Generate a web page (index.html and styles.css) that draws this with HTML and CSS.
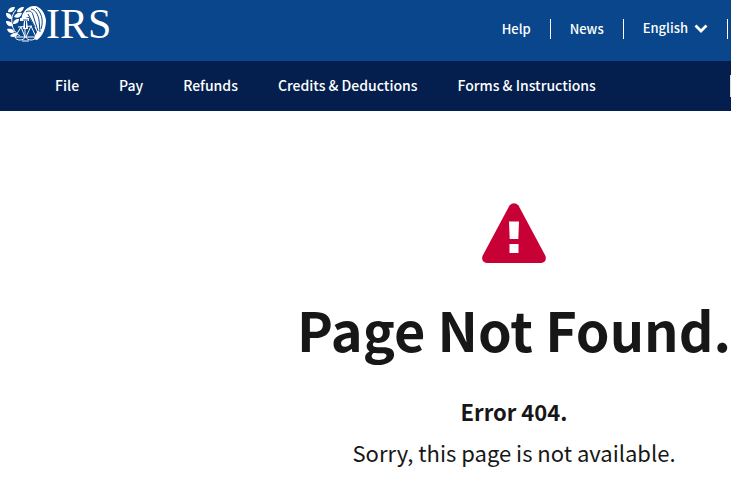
FILE: index.html
```html
<!DOCTYPE html>
<html lang="en">

<head>
    <meta charset="UTF-8">
    <meta name="viewport" content="width=device-width, initial-scale=1.0">
    <title>Page Not Found | IRS</title>
    <link rel="stylesheet" href="styles.css">
</head>

<body>
    <header>
        <div class="top-bar">
            <a class="logo" href="/">
                <!-- eagle, scales and olive branch -->
                <svg class="emblem" viewBox="0 0 40 36" aria-hidden="true">
                    <g fill="#fff">
                        <path d="M9 1C4 1 2 3 2 6c4 1 6-1 7-5z" />
                        <path d="M0 7c0 4 2 6 6 6 0-4-2-6-6-6z" />
                        <path d="M0 15c0 4 3 6 7 5-1-4-3-5-7-5z" />
                        <path d="M1 23c1 4 4 5 8 3-2-3-4-4-8-3z" />
                        <path d="M4 30c3 2 6 1 8-2-3-2-6-1-8 2z" />
                        <path d="M18 1c-4 0-7 2-7 5 4 1 6-1 7-5z" />
                        <path d="M16 7c-4-1-7 1-8 4 4 2 7 0 8-4z" />
                        <path d="M13 13c-4 0-6 2-6 5 4 0 6-2 6-5z" />
                        <path d="M18 6c3-5 7-6 11-6 6 1 10 7 11 14 0 8-3 16-9 20l-3-1 3-7-4-8-4-7-4 1-3 3c-1-3 0-7 2-9z" />
                        <path d="M14 12h9v3h-2l1 8h-5l1-8h-4z" />
                    </g>
                    <g fill="none" stroke="#fff">
                        <path d="M10 4C5 9 5 16 7 22c2 4 4 6 7 8" />
                        <path d="M12 21l14-1M19 20v12M15 21l-6 10h10zM25 20l-5 11h10z" />
                        <path d="M9 31c1 4 9 4 10 0M20 31c1 4 9 4 10 0M16 35h7" />
                    </g>
                    <g fill="none" stroke="#09468b">
                        <path d="M20 6c3-2 6-1 7 3l5 16M25 3c5 1 7 6 8 11l1 12M30 2c5 4 8 12 5 21" />
                        <path d="M22 8l7 13M17 14h5M19.500 15v7" />
                    </g>
                </svg>
                <span>IRS</span>
            </a>
            <ul class="top-links">
                <li><a href="/help">Help</a></li>
                <li><a href="/news">News</a></li>
                <li>
                    <button type="button" aria-haspopup="true">English
                        <svg class="chevron" viewBox="0 0 14 9" aria-hidden="true">
                            <path d="M1.500 1.500L7 7l5.500-5.500" fill="none" stroke="#fff" stroke-width="2.800" />
                        </svg>
                    </button>
                </li>
            </ul>
        </div>
        <nav class="main-nav">
            <ul>
                <li><a href="/file">File</a></li>
                <li><a href="/pay">Pay</a></li>
                <li><a href="/refunds">Refunds</a></li>
                <li><a href="/credits">Credits &amp; Deductions</a></li>
                <li><a href="/forms">Forms &amp; Instructions</a></li>
            </ul>
            <input class="search" type="search" aria-label="Search">
        </nav>
    </header>

    <main>
        <div class="error">
            <svg class="warning" viewBox="0 0 64 60" aria-hidden="true">
                <path d="M27.500 2.500Q32-2 36.500 2.500L63.500 53Q65 59.500 59 60H5Q-1 59.500.5 53z" fill="#c70036" />
                <path d="M27 18.500h10l-.7 17.500h-8.600zM27.500 41h9v9h-9z" fill="#fff" />
            </svg>
            <h1>Page Not Found.</h1>
            <h2>Error 404.</h2>
            <p>Sorry, this page is not available.</p>
        </div>
    </main>
</body>

</html>
```
FILE: styles.css
```css
body {
    font-family: "Noto Sans CJK SC", "Noto Sans", sans-serif;
    background-color: #fff;
    color: #171717;
    margin: 0;
}

ul {
    display: flex;
    list-style: none;
    margin: 0;
    padding: 0;
}

a {
    color: #fff;
    text-decoration: none;
}

.top-bar {
    display: flex;
    justify-content: space-between;
    align-items: flex-start;
    height: 61px;
    background-color: #09468b;
    padding: 0 3px 0 6px;
    box-sizing: border-box;
}

.logo {
    display: flex;
    padding-top: 6px;
    font-family: "Liberation Serif", serif;
    font-size: 42px;
    line-height: 36px;
}

.emblem {
    width: 40px;
    height: 36px;
}

.top-links {
    padding-top: 19px;
    font-size: 13px;
    font-weight: 500;
    line-height: 20px;
}

.top-links li {
    border-right: 1px solid #fff;
    padding: 0 19px;
}

.top-links button {
    display: flex;
    align-items: center;
    gap: 6px;
    border: none;
    background: none;
    color: #fff;
    font: inherit;
    line-height: 18px;
    padding: 0;
    cursor: pointer;
}

.chevron {
    width: 14px;
    height: 9px;
}

.main-nav {
    display: flex;
    align-items: center;
    justify-content: space-between;
    height: 50px;
    background-color: #041f4e;
    padding-left: 55px;
    overflow: hidden;
}

.main-nav ul {
    gap: 40px;
    padding-bottom: 2px;
    font-size: 14px;
    font-weight: 500;
    line-height: 24px;
    white-space: nowrap;
}

.search {
    flex: none;
    width: 200px;
    height: 22px;
    margin-right: -199px;
    border: 1px solid #ddd;
    box-sizing: border-box;
}

main {
    display: flex;
    justify-content: flex-end;
    padding-top: 92px;
}

.error {
    text-align: center;
}

.warning {
    display: block;
    width: 64px;
    height: 60px;
    margin: 0 auto;
}

h1 {
    font-size: 54px;
    line-height: 64px;
    margin: 34px 0;
}

h2 {
    font-size: 22px;
    line-height: 32px;
    margin: 0 0 9px;
}

p {
    font-size: 22px;
    line-height: 32px;
    margin: 0;
}
```
